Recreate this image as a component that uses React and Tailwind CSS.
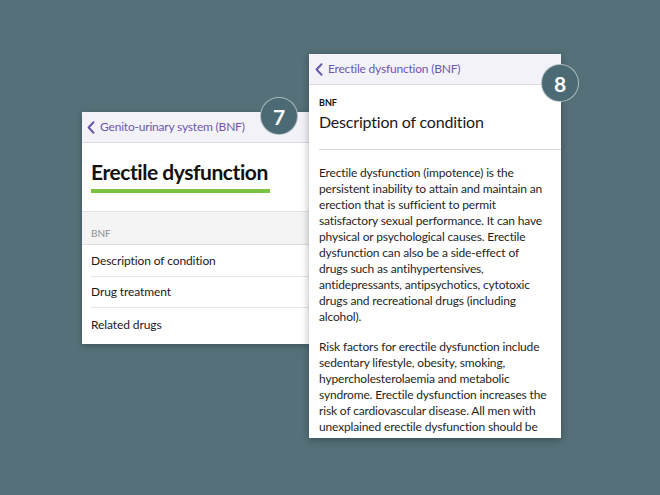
import React from "react";

const Chevron = () => (
  <svg width="8" height="13" viewBox="0 0 8 13" className="shrink-0">
    <path d="M6.5 1.2 L1.6 6.5 L6.5 11.8" fill="none" stroke="#6b58ad" strokeWidth="2" strokeLinecap="round" strokeLinejoin="round" />
  </svg>
);

const Badge = ({ n, className }) => (
  <div className={`absolute w-[38px] h-[38px] rounded-full bg-[#4b6a73] border border-[rgba(255,255,255,0.55)] flex items-center justify-center text-white text-[21px] font-bold leading-none ${className}`}>
    {n}
  </div>
);

const para1 = [
  "Erectile dysfunction (impotence) is the",
  "persistent inability to attain and maintain an",
  "erection that is sufficient to permit",
  "satisfactory sexual performance. It can have",
  "physical or psychological causes. Erectile",
  "dysfunction can also be a side-effect of",
  "drugs such as antihypertensives,",
  "antidepressants, antipsychotics, cytotoxic",
  "drugs and recreational drugs (including",
  "alcohol).",
];

const para2 = [
  "Risk factors for erectile dysfunction include",
  "sedentary lifestyle, obesity, smoking,",
  "hypercholesterolaemia and metabolic",
  "syndrome. Erectile dysfunction increases the",
  "risk of cardiovascular disease. All men with",
  "unexplained erectile dysfunction should be",
];

export default function App() {
  return (
    <div className="w-[660px] h-[495px] bg-[#557079] relative overflow-hidden font-['Lato','Liberation_Sans',sans-serif]">
      <div className="flex items-start pl-[82px] pt-[54px]">
        {/* Left card */}
        <div className="mt-[58px] w-[227px] h-[232px] bg-white shadow-[0_2px_6px_rgba(0,0,0,0.25)] overflow-hidden flex flex-col">
          <div className="h-[31px] bg-[#f4f2f9] border-b border-[#dcdce0] flex items-center gap-[5px] pl-[5px]">
            <Chevron />
            <span className="text-[12px] text-[#6b58ad] tracking-[-0.2px]">Genito-urinary system (BNF)</span>
          </div>
          <div className="h-[69px] border-b border-[#e2e2e4] pl-[9px] pt-[16px]">
            <div className="text-[21px] font-bold text-[#111] leading-[26px] tracking-[-0.45px]">Erectile dysfunction</div>
            <div className="mt-[4px] w-[179px] h-[4px] bg-[#7cc243]"></div>
          </div>
          <div className="h-[33px] bg-[#f4f4f5] border-b border-[#e0e0e2] pl-[9px] pt-[14px] text-[10px] leading-[14px] text-[#8f8f93]">BNF</div>
          <div className="flex flex-col pl-[9px] text-[12px] text-[#1a1a1a] tracking-[-0.1px]">
            <div className="h-[32px] border-b border-[#e4e4e6] flex items-center">Description of condition</div>
            <div className="h-[31px] border-b border-[#e4e4e6] flex items-center">Drug treatment</div>
            <div className="h-[33px] flex items-center">Related drugs</div>
          </div>
        </div>
        {/* Right card */}
        <div className="w-[252px] h-[384px] bg-white shadow-[0_2px_8px_rgba(0,0,0,0.3)] overflow-hidden flex flex-col relative z-10">
          <div className="h-[31px] shrink-0 bg-[#f4f2f9] border-b border-[#dcdce0] flex items-center gap-[5px] pl-[6px]">
            <Chevron />
            <span className="text-[12px] text-[#6b58ad] tracking-[-0.2px]">Erectile dysfunction (BNF)</span>
          </div>
          <div className="ml-[10px] pt-[12px] h-[65px] shrink-0 border-b border-[#d9d9dc]">
            <div className="text-[9px] font-bold text-[#111] leading-[12px]">BNF</div>
            <div className="mt-[3px] text-[16px] text-[#1a1a1a] leading-[20px] tracking-[-0.2px]">Description of condition</div>
          </div>
          <div className="pl-[10px] pr-[4px] pt-[15px] text-[12px] leading-[16px] text-[#1f1f1f] tracking-[-0.15px]">
            <p>
              {para1.map((l, i) => (
                <span key={i} className="block whitespace-nowrap">{l}</span>
              ))}
            </p>
            <p className="mt-[14px]">
              {para2.map((l, i) => (
                <span key={i} className="block whitespace-nowrap">{l}</span>
              ))}
            </p>
          </div>
        </div>
      </div>
      <Badge n="7" className="left-[260px] top-[97px] z-20" />
      <Badge n="8" className="left-[541px] top-[64px] z-20" />
    </div>
  );
}
